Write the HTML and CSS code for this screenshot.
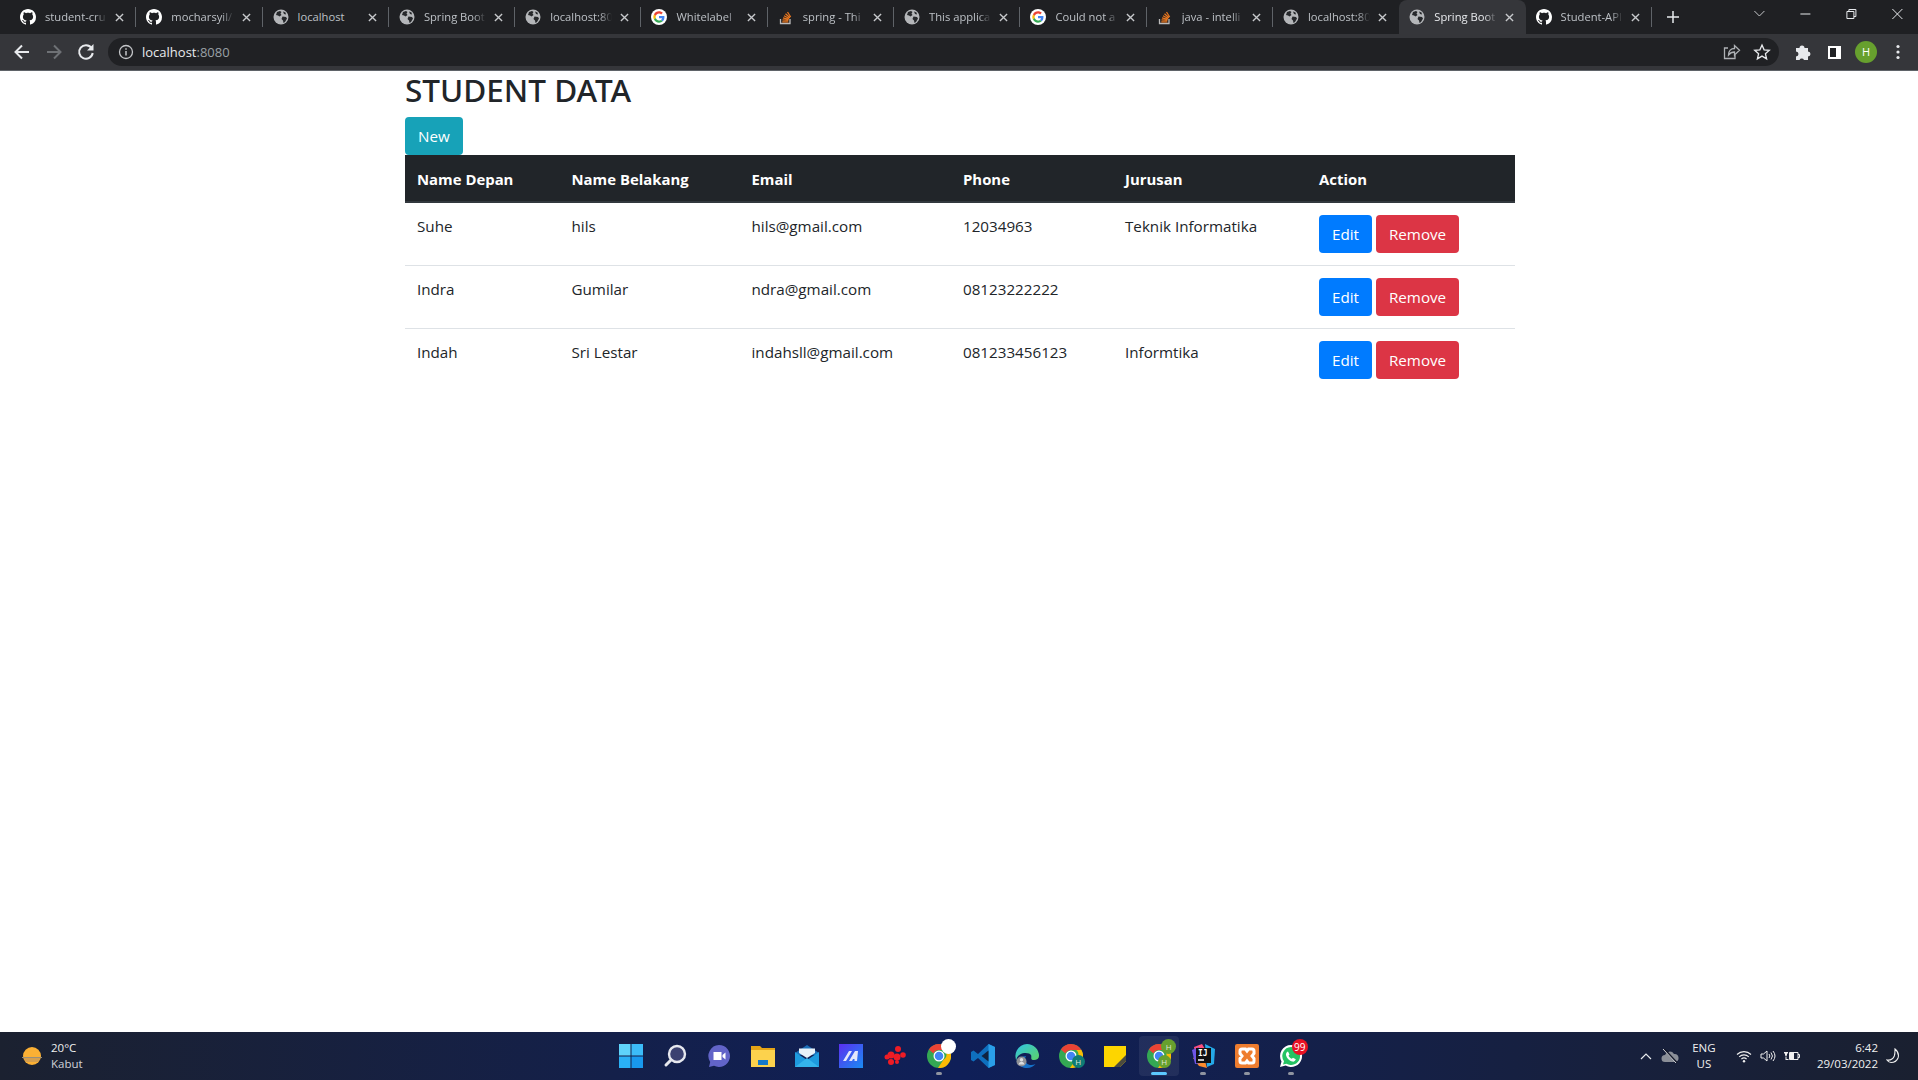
FILE: index.html
```html
<!DOCTYPE html>
<html>
<head>
<meta charset="utf-8">
<title>Spring Boot</title>
<link rel="stylesheet" href="styles.css">
</head>
<body>
<svg class="defs" width="0" height="0">
	<symbol id="gh" viewBox="0 0 16 16"><path fill="#fff" d="M8 0C3.58 0 0 3.58 0 8c0 3.54 2.29 6.53 5.47 7.59.4.07.55-.17.55-.38 0-.19-.01-.82-.01-1.49-2.01.37-2.53-.49-2.69-.94-.09-.23-.48-.94-.82-1.13-.28-.15-.68-.52-.01-.53.63-.01 1.08.58 1.23.82.72 1.21 1.87.87 2.33.66.07-.52.28-.87.51-1.07-1.78-.2-3.64-.89-3.64-3.95 0-.87.31-1.59.82-2.15-.08-.2-.36-1.02.08-2.12 0 0 .67-.21 2.2.82.64-.18 1.32-.27 2-.27.68 0 1.36.09 2 .27 1.53-1.04 2.2-.82 2.2-.82.44 1.1.16 1.92.08 2.12.51.56.82 1.27.82 2.15 0 3.07-1.87 3.75-3.65 3.95.29.25.54.73.54 1.48 0 1.07-.01 1.93-.01 2.2 0 .21.15.46.55.38A8.013 8.013 0 0016 8c0-4.42-3.58-8-8-8z"/></symbol>
	<symbol id="globe" viewBox="0 0 16 16"><circle cx="8" cy="8" r="7.5" fill="#b4b6b9"/><path fill="#26282b" d="M4 3l3-1 1.5 1-1 1.5 1 1.5-2 1.5-1.5-1-2-.5zM9.5 7.5l3.5.5 1 1.5-2 3.5-1.5 1-.5-2.500-1.500-1.500zM10 2.500l2.500 1 .5 2-2-.5z"/></symbol>
	<symbol id="google" viewBox="0 0 48 48"><circle cx="24" cy="24" r="24" fill="#fff"/><g transform="translate(7 7) scale(.71)"><path fill="#ea4335" d="M24 9.5c3.5 0 6.7 1.300 9.100 3.500l6.800-6.800C35.800 2.400 30.200 0 24 0 14.600 0 6.500 5.400 2.600 13.200l7.900 6.200C12.400 13.600 17.700 9.500 24 9.500z"/><path fill="#4285f4" d="M46.900 24.500c0-1.600-.1-3.100-.4-4.500H24v9h12.900c-.6 3-2.200 5.500-4.800 7.200l7.700 6c4.500-4.200 7.100-10.300 7.100-17.700z"/><path fill="#fbbc05" d="M10.500 28.600c-.5-1.500-.8-3-.8-4.600s.3-3.200.8-4.600l-7.900-6.200C.9 16.500 0 20.100 0 24s.9 7.500 2.600 10.800z"/><path fill="#34a853" d="M24 48c6.500 0 11.900-2.100 15.900-5.800l-7.700-6c-2.200 1.400-4.900 2.300-8.200 2.300-6.300 0-11.600-4.200-13.500-9.900l-7.900 6.200C6.500 42.600 14.600 48 24 48z"/></g></symbol>
	<symbol id="so" viewBox="0 0 16 16"><path fill="none" stroke="#bcbbbb" stroke-width="1.3" d="M2.500 10v4.500h9.500V10"/><path fill="none" stroke="#e8761f" stroke-width="1.3" d="M4.300 12.800h6M4.500 10.800l5.900.6M5 8.800l5.700 1.600M6 6.700l5.200 2.800M7.500 4.800l4.500 4M9.500 3l3.200 5"/></symbol>
	<symbol id="close" viewBox="0 0 10 10"><path fill="none" stroke="#c7c9cc" stroke-width="1.5" d="M1 1l8 8M9 1l-8 8"/></symbol>
	<symbol id="chrome" viewBox="0 0 48 48"><circle cx="24" cy="24" r="24" fill="#34a853"/><path fill="#ea4335" d="M24 0a24 24 0 0 1 20.800 12H24a12 12 0 0 0-11 7.200L3.800 11A24 24 0 0 1 24 0z"/><path fill="#fbbc05" d="M44.800 12A24 24 0 0 1 22 48l10.500-16a12 12 0 0 0 2-20z"/><circle cx="24" cy="24" r="11" fill="#fff"/><circle cx="24" cy="24" r="8.500" fill="#4285f4"/></symbol>
</svg>

<header class="browser">
	<div class="tabstrip">
		<div class="tab"><svg class="favicon"><use href="#gh"/></svg><span class="title">student-cru</span><svg class="x"><use href="#close"/></svg></div>
		<div class="tab"><svg class="favicon"><use href="#gh"/></svg><span class="title">mocharsyil/</span><svg class="x"><use href="#close"/></svg></div>
		<div class="tab"><svg class="favicon"><use href="#globe"/></svg><span class="title plain">localhost</span><svg class="x"><use href="#close"/></svg></div>
		<div class="tab"><svg class="favicon"><use href="#globe"/></svg><span class="title">Spring Boot</span><svg class="x"><use href="#close"/></svg></div>
		<div class="tab"><svg class="favicon"><use href="#globe"/></svg><span class="title">localhost:80</span><svg class="x"><use href="#close"/></svg></div>
		<div class="tab"><svg class="favicon"><use href="#google"/></svg><span class="title">Whitelabel</span><svg class="x"><use href="#close"/></svg></div>
		<div class="tab"><svg class="favicon"><use href="#so"/></svg><span class="title">spring - Thi</span><svg class="x"><use href="#close"/></svg></div>
		<div class="tab"><svg class="favicon"><use href="#globe"/></svg><span class="title">This applica</span><svg class="x"><use href="#close"/></svg></div>
		<div class="tab"><svg class="favicon"><use href="#google"/></svg><span class="title">Could not a</span><svg class="x"><use href="#close"/></svg></div>
		<div class="tab"><svg class="favicon"><use href="#so"/></svg><span class="title">java - intelli</span><svg class="x"><use href="#close"/></svg></div>
		<div class="tab no-sep"><svg class="favicon"><use href="#globe"/></svg><span class="title">localhost:80</span><svg class="x"><use href="#close"/></svg></div>
		<div class="tab active no-sep"><svg class="favicon"><use href="#globe"/></svg><span class="title">Spring Boot</span><svg class="x"><use href="#close"/></svg></div>
		<div class="tab"><svg class="favicon"><use href="#gh"/></svg><span class="title">Student-API</span><svg class="x"><use href="#close"/></svg></div>
		<svg class="newtab" viewBox="0 0 12 12"><path fill="none" stroke="#e8eaed" stroke-width="1.5" d="M6 0v12M0 6h12"/></svg>
		<div class="wincontrols">
			<svg class="winbtn chevron" viewBox="-2.4 0 46 28"><path fill="none" stroke="#c4c6c9" d="M18 11l5 5 5-5"/></svg>
			<svg class="winbtn" viewBox="-2.4 0 46 28"><path stroke="#e8eaed" d="M18 14h10"/></svg>
			<svg class="winbtn" viewBox="-2.4 0 46 28"><path fill="none" stroke="#e8eaed" d="M18.500 11.500h7v7h-7zM20.500 11.500v-2h7v7h-2"/></svg>
			<svg class="winbtn" viewBox="-2.4 0 46 28"><path fill="none" stroke="#e8eaed" d="M18 9l10 10M28 9L18 19"/></svg>
		</div>
	</div>
	<div class="toolbar">
		<svg class="tool" viewBox="0 0 32 32"><path fill="none" stroke="#e8eaed" stroke-width="2" d="M23 16H10M16 9.500L9.500 16l6.500 6.500"/></svg>
		<svg class="tool" viewBox="0 0 32 32"><path fill="none" stroke="#6e7175" stroke-width="2" d="M9 16h13M16 9.500l6.500 6.500-6.500 6.500"/></svg>
		<svg class="tool" viewBox="0 0 32 32"><path fill="none" stroke="#e8eaed" stroke-width="2" d="M21.500 12a6.800 6.800 0 1 0 1.200 5"/><path fill="#e8eaed" d="M23.500 8v6.500H17z"/></svg>
		<div class="omnibox">
			<svg class="info" viewBox="0 0 16 16"><circle cx="8" cy="8" r="6.500" fill="none" stroke="#c4c6c9" stroke-width="1.3"/><path stroke="#c4c6c9" stroke-width="1.5" d="M8 7v4.500M8 4.300v1.500"/></svg>
			<span class="url">localhost<span class="port">:8080</span></span>
			<svg class="tool" viewBox="0 0 32 32"><path fill="none" stroke="#aeb1b5" stroke-width="1.3" d="M21 19v3.500H10.500V12H14M14.500 19c0-4 2.500-6.500 6-6.500V9.500l5 4.800-5 4.700v-3c-2.500 0-4.500 1-6 3z"/></svg>
			<svg class="tool" viewBox="0 0 32 32"><path fill="none" stroke="#e8eaed" stroke-width="1.3" d="M16 9l2.100 4.800 5.200.5-3.900 3.400 1.200 5.100-4.600-2.700-4.600 2.700 1.200-5.100-3.900-3.400 5.200-.5z"/></svg>
		</div>
		<div class="tool-right">
			<svg class="tool" viewBox="0 0 32 32"><path fill="#e8eaed" d="M10 12h3.500a2.500 2.500 0 0 1 5 0H22v3.500a2.500 2.500 0 0 1 0 5V24h-4a2.500 2.500 0 0 0-4.500 0H10v-3.500a2.500 2.500 0 0 0 0-5z"/></svg>
			<svg class="tool" viewBox="0 0 32 32"><path fill="#fff" d="M10 10h13v13H10z"/><path fill="#202124" d="M12 12h6v9h-6z"/></svg>
			<div class="avatar-box"><span class="avatar">H</span></div>
			<svg class="tool" viewBox="0 0 32 32"><g fill="#e8eaed"><circle cx="16" cy="10.500" r="1.600"/><circle cx="16" cy="16" r="1.600"/><circle cx="16" cy="21.500" r="1.600"/></g></svg>
		</div>
	</div>
</header>

<main class="page">
	<div class="container">
		<h2 class="heading">STUDENT DATA</h2>
		<a class="btn btn-info">New</a>
		<table class="table">
			<thead>
				<tr>
					<th class="c1">Name Depan</th>
					<th class="c2">Name Belakang</th>
					<th class="c3">Email</th>
					<th class="c4">Phone</th>
					<th class="c5">Jurusan</th>
					<th class="c6">Action</th>
				</tr>
			</thead>
			<tbody>
				<tr>
					<td>Suhe</td>
					<td>hils</td>
					<td>hils@gmail.com</td>
					<td>12034963</td>
					<td>Teknik Informatika</td>
					<td><a class="btn btn-primary">Edit</a> <a class="btn btn-danger">Remove</a></td>
				</tr>
				<tr>
					<td>Indra</td>
					<td>Gumilar</td>
					<td>ndra@gmail.com</td>
					<td>08123222222</td>
					<td></td>
					<td><a class="btn btn-primary">Edit</a> <a class="btn btn-danger">Remove</a></td>
				</tr>
				<tr>
					<td>Indah</td>
					<td>Sri Lestar</td>
					<td>indahsll@gmail.com</td>
					<td>081233456123</td>
					<td>Informtika</td>
					<td><a class="btn btn-primary">Edit</a> <a class="btn btn-danger">Remove</a></td>
				</tr>
			</tbody>
		</table>
	</div>
</main>

<footer class="taskbar">
	<div class="weather">
		<svg class="sun" viewBox="0 0 20 20"><circle cx="10" cy="10" r="9" fill="#fbb034"/><path fill="#c99a55" d="M2 11h16v2l-2 3H4l-2-3z" opacity=".75"/><path stroke="#9a8f7a" d="M0 11.500h20"/></svg>
		<div class="weather-text"><span class="temp">20°C</span><span class="cond">Kabut</span></div>
	</div>
	<div class="apps">
		<div class="app"><svg class="appicon" viewBox="0 0 24 24"><path fill="#5fd4fb" d="M0 0h11.500v11.500H0z"/><path fill="#3cbcf8" d="M12.500 0H24v11.500H12.500z"/><path fill="#2ab0f5" d="M0 12.500h11.500V24H0z"/><path fill="#1899ee" d="M12.500 12.500H24V24H12.500z"/></svg></div>
		<div class="app"><svg class="appicon" viewBox="0 0 24 24"><circle cx="14" cy="10" r="8" fill="#3b4170" stroke="#e6e8ee" stroke-width="2.4"/><path stroke="#e6e8ee" stroke-width="3" stroke-linecap="round" d="M8 16l-5 5"/></svg></div>
		<div class="app"><svg class="appicon" viewBox="0 0 24 24"><path fill="#6264c8" d="M12 1a11 11 0 1 1-5 20.800L2 23l1.200-5A11 11 0 0 1 12 1z"/><path fill="#fff" d="M6.500 8h8v8h-8zM15.500 11l3-2.500v7l-3-2.500z"/></svg></div>
		<div class="app"><svg class="appicon" viewBox="0 0 24 24"><path fill="#e5a416" d="M0 2h9l2 2h13v6H0z"/><path fill="#fcd24d" d="M0 6h24v17H0z"/><path fill="#1479c9" d="M7 16h10v5H7z"/></svg></div>
		<div class="app"><svg class="appicon" viewBox="0 0 24 24"><path fill="#1c6fb8" d="M0 9l12-8 12 8v2H0z"/><path fill="#1e9bdf" d="M0 8l12 8 12-8v15H0z"/><path fill="#e8f2f8" d="M4 4.500h16V9l-8 5-8-5z"/><path fill="#34b4ec" d="M0 23l12-9 12 9z"/></svg></div>
		<div class="app"><svg class="appicon" viewBox="0 0 24 24"><defs><linearGradient id="mg" x1="0" y1="0" x2="1" y2="1"><stop offset="0" stop-color="#5b2ef0"/><stop offset="1" stop-color="#1a8cf2"/></linearGradient></defs><path fill="url(#mg)" d="M0 0h24v24H0z"/><path fill="#e4e6fb" d="M4 17l6-10h3L7 17zM10 17l6-10h3l-1 10h-2.500v-2h-1.500l-1 2z"/></svg></div>
		<div class="app"><svg class="appicon" viewBox="0 0 24 24"><g fill="#ee1c25"><circle cx="8" cy="11" r="3.500"/><circle cx="15" cy="5" r="3"/><circle cx="14" cy="13" r="3.500"/><circle cx="20" cy="11" r="2.800"/><circle cx="8" cy="18" r="3"/><circle cx="4" cy="13" r="2.500"/><circle cx="14" cy="18" r="2"/></g></svg></div>
		<div class="app running"><svg class="appicon"><use href="#chrome"/></svg><span class="white-dot"></span></div>
		<div class="app"><svg class="appicon" viewBox="0 0 24 24"><path fill="#0e6fbe" d="M17.500 0L24 3v18l-6.500 3L7 14l-4.500 3.500L0 16V8l2.500-1.500L7 10z"/><path fill="#2a9fe8" d="M17.500 0L24 3v18l-6.500 3z"/><path fill="#10243f" d="M17.500 6.500L10.500 12l7 5.500z"/></svg></div>
		<div class="app"><svg class="appicon" viewBox="0 0 24 24"><defs><linearGradient id="eg" x1="0" y1="0" x2="1" y2="1"><stop offset="0" stop-color="#2fc4e8"/><stop offset="1" stop-color="#5fd35f"/></linearGradient></defs><path fill="url(#eg)" d="M12 0a12 12 0 0 1 12 12c0 3-3 4.500-6 4-3-.5-1-3-2-5S9 8 5 10.500 1 17 2 18A12 12 0 0 1 12 0z"/><path fill="#1570c8" d="M2 18c2 4 6 6 10 6 4 0 7-2 8.500-4-3 1.500-7 1.500-9-1-1.500-2-2-5-.5-7-4 0-7 2-9 6z"/><circle cx="6.500" cy="17.500" r="5" fill="#8e9096"/><circle cx="6.500" cy="15.800" r="1.700" fill="#dcdde0"/><path fill="#dcdde0" d="M3.500 20.500c.5-2 1.500-2.800 3-2.800s2.500.8 3 2.800z"/></svg></div>
		<div class="app"><svg class="appicon"><use href="#chrome"/></svg><span class="profile-badge teal">H</span></div>
		<div class="app"><svg class="appicon" viewBox="0 0 24 24"><path fill="#fdd500" d="M1 2h22v15l-6 6H1z"/><path fill="#4a4a3f" d="M23 11v6l-6 6h-6z"/></svg></div>
		<div class="app active"><svg class="appicon"><use href="#chrome"/></svg><span class="profile-badge green">H</span><span class="profile-top">H</span></div>
		<div class="app running"><svg class="appicon" viewBox="0 0 24 24"><path fill="#fd4f7d" d="M3 3l8-3 3 5-9 8z"/><path fill="#fc8c2d" d="M2 14l6 8 8 2-4-14z"/><path fill="#25a9e8" d="M14 0l10 5-1 15-7 3z"/><path fill="#6f56e8" d="M1 6l7-3 2 16-6 1z"/><path fill="#111" d="M5 4h15v15H5z"/><text class="ij" x="7" y="12">IJ</text><path stroke="#fff" stroke-width="1.5" d="M7 16h6"/></svg></div>
		<div class="app running"><svg class="appicon" viewBox="0 0 24 24"><rect width="24" height="24" rx="2" fill="#ee7d2f"/><path fill="none" stroke="#fff" stroke-width="3" d="M7 5h3.500l1.500 2 1.500-2H17a2 2 0 0 1 2 2v2.500L17 12l2 2.500V17a2 2 0 0 1-2 2h-3.500L12 17l-1.500 2H7a2 2 0 0 1-2-2v-2.500L7 12 5 9.500V7a2 2 0 0 1 2-2z"/></svg></div>
		<div class="app running"><svg class="appicon" viewBox="0 0 24 24"><path fill="#fff" d="M12 1a11 11 0 1 1-5.300 20.600L1 23l1.500-5.500A11 11 0 0 1 12 1z"/><path fill="#25c363" d="M12 3a9 9 0 1 1-4.600 16.700L4 20.500l1-3.300A9 9 0 0 1 12 3z"/><path fill="#fff" d="M9 7.500l1.500 3-1 1.300c.7 1.300 1.700 2.300 3.200 3l1.300-1 2.800 1.500c-.5 2-2 2.500-3.300 2.300-3-.6-6-3.500-6.500-6.500-.2-1.500.5-3 2-3.600z"/></svg><span class="count">99</span></div>
	</div>
	<div class="tray">
		<svg class="tray-caret" viewBox="0 0 14 14"><path fill="none" stroke="#e8eaed" stroke-width="1.2" d="M2 10l5-5 5 5"/></svg>
		<svg class="tray-cloud" viewBox="0 0 18 14"><path fill="#8b8f98" d="M4 13a3.500 3.500 0 0 1 0-7 5 5 0 0 1 9-1 4 4 0 0 1 1 8z"/><path stroke="#15192a" stroke-width="2" d="M3 0l13 14"/><path stroke="#d6d8dc" d="M2 0l13 14"/></svg>
		<div class="lang"><span>ENG</span><span>US</span></div>
		<svg class="tray-icon" viewBox="0 0 16 16"><g fill="none" stroke="#f0f0f0" stroke-width="1.1"><path d="M1 6.500a10 10 0 0 1 14 0M3.200 8.800a7 7 0 0 1 9.600 0M5.400 11a4 4 0 0 1 5.200 0"/></g><circle cx="8" cy="13.300" r="1.200" fill="#f0f0f0"/></svg>
		<svg class="tray-icon" viewBox="0 0 16 16"><g fill="none" stroke="#f0f0f0" stroke-width="1"><path d="M1 6v4h2.500L7 13V3L3.500 6z"/><path d="M9 6a3 3 0 0 1 0 4M11 4.500a5.500 5.500 0 0 1 0 7M13 3a8 8 0 0 1 0 10"/></g></svg>
		<svg class="tray-icon" viewBox="0 0 16 16"><path fill="none" stroke="#f0f0f0" d="M5.500 4.500h8.500v7H5.500zM14 6.500h1.500v3H14"/><path fill="#f0f0f0" d="M6 5h4v6H6zM0 4h4v1.500H3V7a1 1 0 0 1-1 1 1 1 0 0 1-1-1V5.500H0zM1.500 8.500h1V11h2v1h-3z"/></svg>
		<div class="clock"><span>6:42</span><span>29/03/2022</span></div>
		<svg class="tray-moon" viewBox="0 0 16 16"><path fill="none" stroke="#f0f0f0" stroke-width="1.1" d="M9 1c3 2.500 4 6 3 9-1 2.500-4 4.500-7 4.500-1.500 0-3-1-4-2.500 3.500.5 6-1 7.300-4 .8-2.300.7-4.800.7-7z"/></svg>
	</div>
</footer>
</body>
</html>
```

FILE: styles.css
```css
*
{
	box-sizing : border-box;
}
html, body
{
	height : 100%;
}
body
{
	margin : 0;
	display : flex;
	flex-direction : column;
	overflow : hidden;
	font-family : "Open Sans", "Noto Sans", sans-serif;
	color : #212529;
	background-color : #fff;
}
.defs
{
	display : block;
	height : 0;
}

/* browser chrome */
.browser
{
	background-color : #1f2023;
	border-bottom : 1px solid #5f6368;
}
.tabstrip
{
	display : flex;
	align-items : center;
	height : 34px;
	padding-left : 10px;
}
.tab
{
	position : relative;
	display : flex;
	align-items : center;
	flex : 0 0 126.3px;
	min-width : 0;
	height : 34px;
	padding : 0 12px 0 10px;
	font-size : 11.2px;
	color : #bdc1c6;
}
.tab::after
{
	content : "";
	position : absolute;
	right : 0;
	top : 7px;
	height : 20px;
	width : 1px;
	background-color : #5f6368;
}
.tab.no-sep::after, .tab.active::after
{
	display : none;
}
.tab.active
{
	background-color : #35363a;
	border-radius : 8px 8px 0 0;
	color : #e8eaed;
}
.favicon
{
	flex : none;
	width : 16px;
	height : 16px;
}
.title
{
	flex : 1;
	min-width : 0;
	margin-left : 9px;
	padding-bottom : 2px;
	overflow : hidden;
	white-space : nowrap;
	-webkit-mask-image : linear-gradient(to right, #000 80%, transparent 100%);
	mask-image : linear-gradient(to right, #000 80%, transparent 100%);
}
.title.plain
{
	-webkit-mask-image : none;
	mask-image : none;
}
.x
{
	flex : none;
	width : 9px;
	height : 9px;
	margin-left : 8px;
}
.newtab
{
	flex : none;
	width : 12px;
	height : 12px;
	margin-left : 15px;
}
.wincontrols
{
	display : flex;
	margin-left : auto;
	align-self : flex-start;
}
.winbtn
{
	display : block;
	width : 46px;
	height : 28px;
}
.toolbar
{
	display : flex;
	align-items : center;
	height : 36px;
	padding : 0 4px 0 6px;
	background-color : #35363a;
}
.tool
{
	flex : none;
	width : 32px;
	height : 32px;
}
.omnibox
{
	flex : 1;
	display : flex;
	align-items : center;
	height : 28px;
	margin-left : 6px;
	padding : 0 1px 0 10px;
	background-color : #202124;
	border-radius : 14px;
}
.info
{
	flex : none;
	width : 16px;
	height : 16px;
}
.url
{
	flex : 1;
	margin-left : 8px;
	font-size : 13px;
	color : #e8eaed;
}
.port
{
	color : #9aa0a6;
}
.tool-right
{
	display : flex;
	align-items : center;
	margin-left : 7px;
}
.avatar-box
{
	display : flex;
	align-items : center;
	justify-content : center;
	width : 32px;
	height : 32px;
}
.avatar
{
	width : 22px;
	height : 22px;
	border-radius : 50%;
	background-color : #67a02e;
	color : #fff;
	font-size : 11px;
	line-height : 22px;
	text-align : center;
}

/* page */
.page
{
	flex : 1;
	padding-left : 2px;
}
.container
{
	width : 1140px;
	margin : 0 auto;
	padding : 0 15px;
}
.heading
{
	margin : 0 0 8px;
	font-family : "Noto Sans", "Open Sans", sans-serif;
	font-size : 31.5px;
	font-weight : 500;
	line-height : 38.4px;
}
.btn
{
	display : inline-block;
	height : 38px;
	padding : 6px 12px;
	border : 1px solid transparent;
	border-radius : 4px;
	color : #fff;
	font-size : 15.2px;
	line-height : 24px;
	vertical-align : middle;
}
.btn-info
{
	display : block;
	width : max-content;
	background-color : #17a2b8;
}
.btn-primary
{
	background-color : #007bff;
}
.btn-danger
{
	background-color : #dc3545;
}
.table
{
	width : 100%;
	table-layout : fixed;
	border-collapse : collapse;
	font-size : 15.2px;
	line-height : 24px;
}
.table th
{
	padding : 12px 12px 10px;
	text-align : left;
	font-size : 14.9px;
	font-weight : 700;
	color : #fff;
	background-color : #212529;
	border-bottom : 2px solid #32383e;
}
.table td
{
	padding : 12px;
	line-height : 22px;
	vertical-align : top;
	border-bottom : 1px solid #dee2e6;
}
.table tr:last-child td
{
	border-bottom : 0;
}
.c1 { width : 154.5px; }
.c2 { width : 180px; }
.c3 { width : 211.5px; }
.c4 { width : 162px; }
.c5 { width : 194px; }

/* taskbar */
.taskbar
{
	display : flex;
	align-items : center;
	flex : none;
	height : 48px;
	background : linear-gradient(to right, #1b2130 0, #14204a 32%, #0f1f58 50%, #14204a 68%, #1a2030 100%);
	color : #f0f0f0;
}
.weather
{
	flex : 0 0 608.5px;
	display : flex;
	align-items : center;
	padding-left : 22px;
}
.sun
{
	width : 20px;
	height : 20px;
}
.weather-text
{
	display : flex;
	flex-direction : column;
	margin-left : 9px;
	font-size : 11.5px;
	line-height : 16px;
}
.cond
{
	color : #cfd2d8;
}
.apps
{
	display : flex;
	align-items : center;
}
.app
{
	position : relative;
	display : flex;
	align-items : center;
	justify-content : center;
	width : 44.03px;
	height : 40px;
	border-radius : 4px;
}
.appicon
{
	width : 24px;
	height : 24px;
}
.app.active
{
	width : 40px;
	margin : 0 2px;
	background-color : rgba(255, 255, 255, .07);
}
.app.running::after, .app.active::after
{
	content : "";
	position : absolute;
	left : 50%;
	bottom : 1px;
	width : 6px;
	height : 3px;
	margin-left : -3px;
	border-radius : 2px;
	background-color : #8f94a0;
}
.app.active::after
{
	width : 16px;
	margin-left : -8px;
	background-color : #5cc8ff;
}
.white-dot
{
	position : absolute;
	top : 3px;
	right : 4.5px;
	width : 15px;
	height : 15px;
	border-radius : 50%;
	background-color : #fff;
}
.profile-badge, .profile-top
{
	position : absolute;
	width : 13px;
	height : 13px;
	border-radius : 50%;
	color : #dfe6d6;
	font-size : 8px;
	line-height : 13px;
	text-align : center;
}
.profile-badge
{
	right : 8px;
	bottom : 8px;
}
.profile-badge.teal
{
	background-color : #0f7c74;
}
.profile-badge.green
{
	background-color : #67a02e;
}
.profile-top
{
	top : 3px;
	right : 2.5px;
	width : 15px;
	height : 15px;
	line-height : 15px;
	background-color : #67a02e;
}
.ij
{
	fill : #fff;
	font-family : "DejaVu Sans Mono", monospace;
	font-size : 8px;
	font-weight : 700;
}
.count
{
	position : absolute;
	top : 3px;
	right : 5px;
	min-width : 16px;
	height : 16px;
	border-radius : 8px;
	background-color : #e81123;
	color : #fff;
	font-size : 10px;
	line-height : 16px;
	text-align : center;
}
.tray
{
	display : flex;
	align-items : center;
	margin-left : auto;
	padding-right : 16px;
	font-size : 11.5px;
	line-height : 16px;
}
.tray-caret
{
	width : 14px;
	height : 14px;
}
.tray-cloud
{
	width : 18px;
	height : 14px;
	margin-left : 8px;
}
.lang
{
	display : flex;
	flex-direction : column;
	align-items : center;
	width : 30px;
	margin : 0 17px 0 10px;
}
.tray-icon
{
	width : 16px;
	height : 16px;
	margin-right : 8px;
}
.clock
{
	display : flex;
	flex-direction : column;
	align-items : flex-end;
	margin-left : 9px;
}
.tray-moon
{
	width : 16px;
	height : 16px;
	margin-left : 8px;
}
```
